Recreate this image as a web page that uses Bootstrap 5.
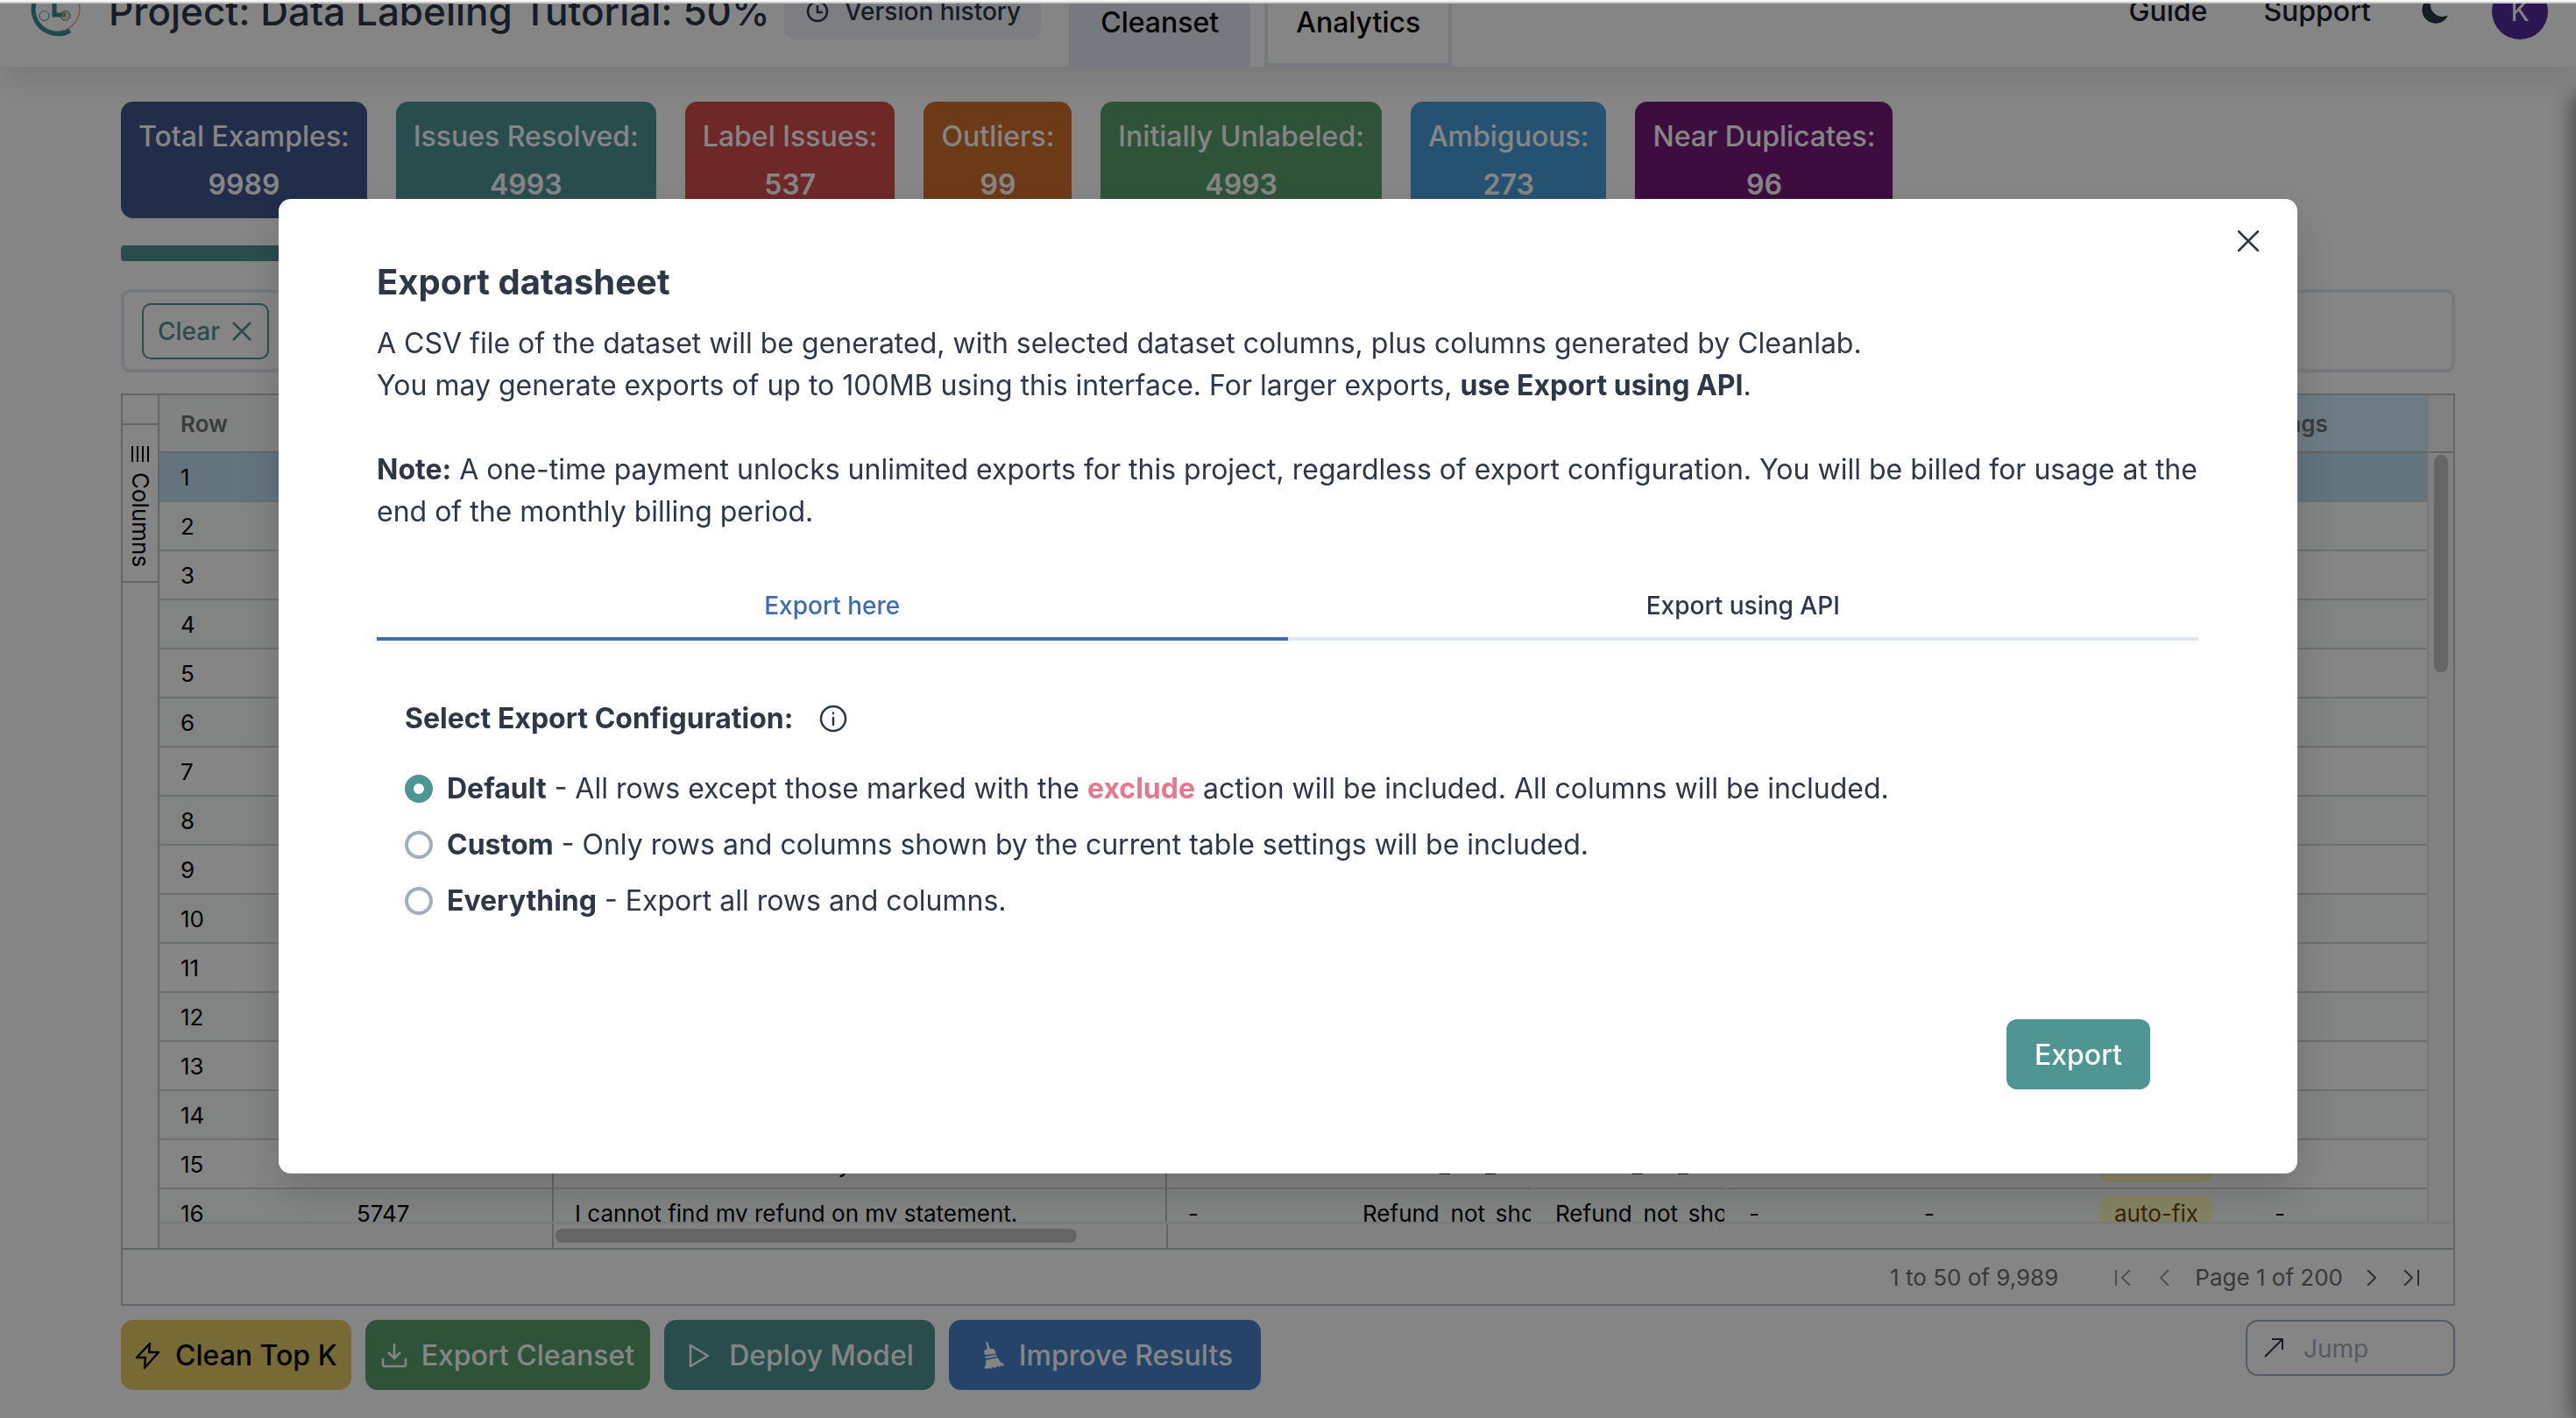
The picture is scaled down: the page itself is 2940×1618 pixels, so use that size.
<!DOCTYPE html>
<html lang="en">
<head>
<meta charset="utf-8">
<meta name="viewport" content="width=device-width, initial-scale=1">
<title>Export datasheet</title>
<link href="https://cdn.jsdelivr.net/npm/bootstrap@5.3.0/dist/css/bootstrap.min.css" rel="stylesheet">
<style>
  :root { --ink: #2d3748; --teal: #4f9593; --line: #bdc3c7; --soft: #e2e8f0; }
  html, body { height: 100%; }
  body { font-family: Inter, "Liberation Sans", sans-serif; font-size: 32px; line-height: 48px; color: var(--ink); background: #fff; overflow: hidden; }
  svg { display: block; flex: none; }
  .window-edge { height: 4px; background: #f7f7f8; border-bottom: 2px solid #c8c8c8; z-index: 1080; }

  .site-bar { height: 128px; margin-top: -52px; padding: 2px 32px 0; background: #fff; box-shadow: 0 20px 30px -6px rgba(0,0,0,.1); position: relative; }
  .project-name { font-size: 44px; line-height: 56px; font-weight: 500; margin-left: 32px; }
  .history-btn { height: 64px; margin-left: 16px; padding: 0 22px 0 24px; gap: 18px; font-size: 28px; font-weight: 500; background: #edf2f7; border-radius: 12px; color: var(--ink); }
  .site-tab { height: 100px; padding: 0 32px; font-weight: 500; color: #000; border: 4px solid var(--soft); text-decoration: none; }
  .site-tab.active { background: var(--soft); }
  .side-link { color: #1a202c; font-weight: 500; text-decoration: none; }
  .moon { margin: 0 48px 0 56px; }
  .user-dot { width: 64px; height: 64px; background: #512c9e; color: #fff; }

  .page-main { padding: 40px 138px 0; }
  .stat-row { gap: 33px; }
  .stat-tile { height: 133px; padding: 12px 20px; border-radius: 14px; color: #fff; line-height: 55px; font-weight: 500; text-align: center; }
  .stat-tile b { font-weight: 600; }
  .bg-navy { background: #41578f; } .bg-teal { background: var(--teal); } .bg-brick { background: #d34d4d; }
  .bg-rust { background: #d1702f; } .bg-leaf { background: #5aa06e; } .bg-sky { background: #499edb; } .bg-plum { background: #77197b; }
  .done-track { height: 18px; margin-top: 31px; border-radius: 4px; }
  .filter-box { height: 95px; margin-top: 32px; padding: 0 20px; border: 4px solid var(--soft); border-radius: 10px; }
  .clear-btn { height: 64px; padding: 0 18px 0 16px; gap: 14px; font-size: 28px; font-weight: 500; color: var(--teal); border: 2px solid var(--teal); border-radius: 10px; background: none; }

  .sheet { margin-top: 24px; border: 2px solid var(--line); font-size: 26px; line-height: 36px; color: #000; }
  .sheet-side { width: 42px; border-right: 2px solid var(--line); padding-top: 32px; }
  .sheet-side button { writing-mode: vertical-rl; width: 40px; height: 182px; padding: 24px 0 0; gap: 12px; font-size: 26px; line-height: 40px; color: #000; background: none; border: solid var(--line); border-width: 2px 0; }
  .sheet-rows { height: 943px; }
  .sheet-table { width: 100%; table-layout: fixed; border-collapse: separate; border-spacing: 0; }
  .sheet-table th, .sheet-table td { padding: 2px 0 0 24px; white-space: nowrap; overflow: hidden; border-bottom: 2px solid #cfd4d6; }
  .sheet-table th { height: 66px; color: #6d7375; font-weight: 600; background: #f7fafa; border-color: var(--line); }
  .sheet-table td { height: 56px; }
  .sheet-table tr:nth-child(even) td { background: #f9fdfb; }
  .sheet-table tr.picked td { background: #bedff4; }
  .sheet-table th.tinted { background: #d2ecfd; }
  .sheet-table td.edge { border-right: 2px solid var(--line); }
  .sheet-table td.cut { border-right: 4px solid transparent; }
  .fix-tag { display: inline-block; height: 40px; line-height: 40px; padding: 0 17px; border-radius: 12px; background: #fefcbf; color: #744210; vertical-align: middle; }
  .rail { width: 30px; background: #f7f7f7; border-left: 2px solid #e2e5e7; }
  .rail-top { height: 66px; border-bottom: 2px solid var(--line); }
  .rail-thumb { width: 16px; height: 248px; margin: 2px auto 0; border-radius: 8px; background: #c1c1c1; }
  .h-rail { height: 30px; background: #f9f9f9; border-top: 2px solid #e6e8ea; }
  .h-pinned { width: 450px; border-right: 2px solid var(--line); }
  .h-track { width: 701px; border-right: 2px solid var(--line); }
  .h-thumb { height: 16px; width: 595px; border-radius: 8px; background: #c1c1c1; margin: 6px 0 0 2px; }
  .pager { height: 64px; border-top: 2px solid var(--line); padding: 2px 38px 0; color: #6d6d6d; }
  .pager button { border: 0; background: none; padding: 0; color: #5a5a5a; }
  .pager button:disabled { color: #999; }

  .act { height: 80px; border: 0; border-radius: 14px; font-weight: 500; color: #fff; padding: 2px 16px 0; gap: 16px; }
  .act-gold { background: #e7cc64; color: #000; }
  .act-blue { background: #4981ca; }
  .act-sm { padding-left: 18px; padding-right: 18px; }
  .act-md { padding-left: 18px; padding-right: 24px; }
  .act-lg { padding-left: 26px; padding-right: 32px; gap: 14px; }
  .jump-box { width: 239px; height: 64px; border: 2px solid #a0aec0; border-radius: 14px; padding: 0 18px; gap: 22px; }
  .jump-box input { min-width: 0; width: 100%; border: 0; background: none; outline: 0; font-size: 28px; padding: 2px 0 0; }
  .jump-box input::placeholder { color: #a0aec0; opacity: 1; }

  .drawer-shade { position: fixed; left: 100%; top: 112px; bottom: 0; width: 40px; box-shadow: 0 0 24px 4px rgba(0,0,0,.5); }
  .modal-backdrop.show { opacity: .48; }
  .export-dialog { max-width: 2304px; margin: 227px auto 0; }
  .export-dialog .modal-content { border: 0; border-radius: 14px; padding: 68px 113px 96px 112px; color: var(--ink); box-shadow: 0 20px 50px rgba(0,0,0,.16); }
  .shut-btn { position: absolute; right: 44px; top: 36px; padding: 0; border: 0; background: none; color: var(--ink); }
  .dialog-title { font-size: 40px; line-height: 54px; font-weight: 700; margin: 0 0 19px; }
  .export-tabs { margin-top: 63px; font-size: 28px; line-height: 40px; }
  .export-tabs button { border: 0; border-bottom: 4px solid var(--soft); background: none; padding: 0 0 16px; font-weight: 500; color: var(--ink); height: 60px; }
  .export-tabs button.active { color: #3e6cae; border-color: #3e6cae; }
  .export-form { margin: 65px 32px 0; }
  .export-form legend { font-size: 32px; line-height: 48px; font-weight: 700; gap: 30px; margin: 0 0 24px; }
  .choice { gap: 16px; height: 64px; }
  .choice input { appearance: none; width: 32px; height: 32px; margin: 0; border: 4px solid #a0aec0; border-radius: 50%; flex: none; }
  .choice input:checked { border: 10px solid var(--teal); }
  .modal-content b { font-weight: 700; }
  .choice .drop { color: #e5788f; }
  .go-btn { height: 80px; margin: 103px 55px 0 0; padding: 2px 32px 0; border: 0; border-radius: 12px; background: var(--teal); color: #fff; font-weight: 500; }
</style>
<script src="https://cdn.jsdelivr.net/npm/bootstrap@5.3.0/dist/js/bootstrap.bundle.min.js"></script>
</head>
<body>
<div class="window-edge fixed-top"></div>

<nav class="site-bar d-flex align-items-center">
  <svg width="60" height="64" viewBox="0 0 60 64" fill="none" aria-hidden="true">
    <circle cx="33" cy="29" r="26" stroke="#e0b070" stroke-width="1.500"/>
    <path d="M30 2a28 28 0 1 0 18 52" stroke="#35909a" stroke-width="5"/>
    <path d="M30 18v18h13" stroke="#35909a" stroke-width="5"/>
    <circle cx="18.500" cy="37" r="5.500" stroke="#35909a"/>
    <circle cx="42.500" cy="37" r="5.500" stroke="#35909a" fill="#e0b070" fill-opacity=".5"/>
  </svg>
  <h1 class="project-name mb-0 text-nowrap">Project: Data Labeling Tutorial: 50%</h1>
  <button class="history-btn btn d-flex align-items-center text-nowrap" type="button">
    <svg width="26" height="26" viewBox="0 0 26 26" fill="none" stroke="currentColor" stroke-width="2.500"><circle cx="13" cy="13" r="11"/><path d="M13 6v8h6"/></svg>
    Version history
  </button>
  <div class="d-flex align-self-end ms-4 gap-3 ps-2">
    <a class="site-tab active d-flex align-items-center" href="#">Cleanset</a>
    <a class="site-tab d-flex align-items-center" href="#">Analytics</a>
  </div>
  <div class="d-flex align-items-center ms-auto">
    <a class="side-link me-5" href="#">Guide</a>
    <a class="side-link ms-3" href="#">Support</a>
    <svg class="moon" width="34" height="34" viewBox="0 0 34 34" fill="#2d3748" aria-label="Dark mode"><path d="M15 0A15.500 15.500 0 1 0 32 21.500 14 14 0 0 1 15 0z"/></svg>
    <span class="user-dot rounded-circle d-flex align-items-center justify-content-center">K</span>
  </div>
</nav>

<main class="page-main">
  <div class="stat-row d-flex text-nowrap">
    <div class="stat-tile bg-navy">Total Examples:<br><b>9989</b></div>
    <div class="stat-tile bg-teal">Issues Resolved:<br><b>4993</b></div>
    <div class="stat-tile bg-brick">Label Issues:<br><b>537</b></div>
    <div class="stat-tile bg-rust">Outliers:<br><b>99</b></div>
    <div class="stat-tile bg-leaf">Initially Unlabeled:<br><b>4993</b></div>
    <div class="stat-tile bg-sky">Ambiguous:<br><b>273</b></div>
    <div class="stat-tile bg-plum">Near Duplicates:<br><b>96</b></div>
  </div>
  <div class="done-track overflow-hidden"><div class="bg-teal h-100 w-50"></div></div>
  <div class="filter-box d-flex align-items-center">
    <button class="clear-btn d-flex align-items-center" type="button">Clear
      <svg width="22" height="22" viewBox="0 0 22 22" stroke="currentColor" stroke-width="2.500"><path d="M1 1l20 20M21 1L1 21"/></svg>
    </button>
  </div>

  <section class="sheet">
    <div class="d-flex">
      <div class="sheet-side flex-shrink-0">
        <button type="button" class="d-flex align-items-center">
          <svg width="22" height="18" viewBox="0 0 22 18" stroke="#000" stroke-width="2"><path d="M2 0v18M8 0v18M14 0v18M20 0v18"/></svg>
          Columns
        </button>
      </div>
      <div class="flex-grow-1 overflow-hidden">
        <div class="d-flex sheet-rows overflow-hidden">
          <div class="flex-grow-1">
            <table class="sheet-table">
              <colgroup><col style="width:201px"><col style="width:249px"><col><col style="width:199px"><col style="width:220px"><col style="width:221px"><col style="width:200px"><col style="width:200px"><col style="width:200px"><col style="width:198px"></colgroup>
              <thead><tr><th>Row</th><th></th><th></th><th></th><th></th><th></th><th></th><th></th><th></th><th class="tinted">Tags</th></tr></thead>
              <tbody>
                <tr class="picked"><td>1</td><td></td><td></td><td></td><td></td><td></td><td></td><td></td><td></td><td></td></tr>
                <tr><td>2</td><td></td><td></td><td></td><td></td><td></td><td></td><td></td><td></td><td></td></tr>
                <tr><td>3</td><td></td><td></td><td></td><td></td><td></td><td></td><td></td><td></td><td></td></tr>
                <tr><td>4</td><td></td><td></td><td></td><td></td><td></td><td></td><td></td><td></td><td></td></tr>
                <tr><td>5</td><td></td><td></td><td></td><td></td><td></td><td></td><td></td><td></td><td></td></tr>
                <tr><td>6</td><td></td><td></td><td></td><td></td><td></td><td></td><td></td><td></td><td></td></tr>
                <tr><td>7</td><td></td><td></td><td></td><td></td><td></td><td></td><td></td><td></td><td></td></tr>
                <tr><td>8</td><td></td><td></td><td></td><td></td><td></td><td></td><td></td><td></td><td></td></tr>
                <tr><td>9</td><td></td><td></td><td></td><td></td><td></td><td></td><td></td><td></td><td></td></tr>
                <tr><td>10</td><td></td><td></td><td></td><td></td><td></td><td></td><td></td><td></td><td></td></tr>
                <tr><td>11</td><td></td><td></td><td></td><td></td><td></td><td></td><td></td><td></td><td></td></tr>
                <tr><td>12</td><td></td><td></td><td></td><td></td><td></td><td></td><td></td><td></td><td></td></tr>
                <tr><td>13</td><td></td><td></td><td></td><td></td><td></td><td></td><td></td><td></td><td></td></tr>
                <tr><td>14</td><td></td><td></td><td></td><td></td><td></td><td></td><td></td><td></td><td></td></tr>
                <tr><td>15</td><td class="edge"></td><td class="edge">The refund has not hit my card statement.</td><td></td><td class="cut">Refund_not_showing</td><td class="cut">Refund_not_showing</td><td></td><td></td><td><span class="fix-tag">auto-fix</span></td><td></td></tr>
                <tr><td>16</td><td class="edge">5747</td><td class="edge">I cannot find my refund on my statement.</td><td>-</td><td class="cut">Refund_not_showing</td><td class="cut">Refund_not_showing</td><td>-</td><td>-</td><td><span class="fix-tag">auto-fix</span></td><td>-</td></tr>
              </tbody>
            </table>
          </div>
          <div class="rail flex-shrink-0">
            <div class="rail-top"></div>
            <div class="rail-thumb"></div>
          </div>
        </div>
        <div class="h-rail d-flex">
          <div class="h-pinned"></div>
          <div class="h-track"><div class="h-thumb"></div></div>
        </div>
      </div>
    </div>
    <div class="pager d-flex align-items-center justify-content-end">
      <span>1 to 50 of 9,989</span>
      <button class="ms-5 ps-3" type="button" disabled aria-label="First page"><svg width="20" height="18" viewBox="0 0 20 18" fill="none" stroke="currentColor" stroke-width="2"><path d="M2 0v18M18 0L9 9l9 9"/></svg></button>
      <button class="ms-4 ps-1" type="button" disabled aria-label="Previous page"><svg width="20" height="18" viewBox="0 0 20 18" fill="none" stroke="currentColor" stroke-width="2"><path d="M14 0L5 9l9 9"/></svg></button>
      <span class="ms-4">Page 1 of 200</span>
      <button class="ms-4" type="button" aria-label="Next page"><svg width="20" height="18" viewBox="0 0 20 18" fill="none" stroke="currentColor" stroke-width="2"><path d="M4 0l9 9-9 9"/></svg></button>
      <button class="ms-4" type="button" aria-label="Last page"><svg width="20" height="18" viewBox="0 0 20 18" fill="none" stroke="currentColor" stroke-width="2"><path d="M2 0l9 9-9 9M18 0v18"/></svg></button>
    </div>
  </section>

  <div class="d-flex align-items-start gap-3 mt-3 text-nowrap">
    <button class="act act-gold d-flex align-items-center" type="button">
      <svg width="30" height="32" viewBox="0 0 30 32" fill="none" stroke="#000" stroke-width="2.500" stroke-linejoin="round"><path d="M17 2L2 18h10l-1 12L27 12H16z"/></svg>
      Clean Top K
    </button>
    <button class="act act-sm bg-leaf d-flex align-items-center" type="button">
      <svg width="30" height="30" viewBox="0 0 30 30" fill="none" stroke="#fff" stroke-width="2.500"><path d="M15 1v17M8 11l7 7 7-7M2 18v7q0 2 2 2h22q2 0 2-2v-7"/></svg>
      Export Cleanset
    </button>
    <button class="act act-md bg-teal d-flex align-items-center" type="button">
      <svg width="40" height="28" viewBox="0 0 40 28" fill="none" stroke="#fff" stroke-width="2.500" stroke-linejoin="round"><path d="M12 2v24l20-12z"/></svg>
      Deploy Model
    </button>
    <button class="act act-lg act-blue d-flex align-items-center" type="button">
      <svg width="40" height="32" viewBox="0 0 40 32" fill="#fff"><path d="M16 1l2-1 3 8q5-1 6 4l1 2-13 1-1-5 4-2zM15 17l13-2 1 2-13 2zM16 21l14-3q2 6 7 7l-1 3-3-1-1 2-3-1-2 2-3-1-2 2-2-1-2 1-4-1q3-4 2-9z"/></svg>
      Improve Results
    </button>
    <label class="jump-box d-flex align-items-center ms-auto">
      <svg width="24" height="24" viewBox="0 0 24 24" fill="none" stroke="#2d3748" stroke-width="2"><path d="M2 22L22 2M10 2h12v12"/></svg>
      <input type="text" placeholder="Jump" aria-label="Jump to row">
    </label>
  </div>
</main>
<div class="drawer-shade"></div>

<div class="modal-backdrop show"></div>
<div class="modal d-block" tabindex="-1" role="dialog" aria-labelledby="dlg-title">
  <div class="export-dialog modal-dialog">
    <div class="modal-content">
      <button class="shut-btn" type="button" aria-label="Close">
        <svg width="24" height="24" viewBox="0 0 24 24" stroke="currentColor" stroke-width="2.500" stroke-linecap="round"><path d="M1 1l22 22M23 1L1 23"/></svg>
      </button>
      <h2 class="dialog-title" id="dlg-title">Export datasheet</h2>
      <p class="mb-5">A CSV file of the dataset will be generated, with selected dataset columns, plus columns generated by Cleanlab.<br>You may generate exports of up to 100MB using this interface. For larger exports, <b>use Export using API</b>.</p>
      <p class="mb-0"><b>Note:</b> A one-time payment unlocks unlimited exports for this project, regardless of export configuration. You will be billed for usage at the end of the monthly billing period.</p>
      <div class="export-tabs d-flex" role="tablist">
        <button class="active w-50" type="button" role="tab" aria-selected="true">Export here</button>
        <button class="w-50" type="button" role="tab" aria-selected="false">Export using API</button>
      </div>
      <fieldset class="export-form">
        <legend class="d-flex align-items-center">Select Export Configuration:
          <svg width="32" height="32" viewBox="0 0 32 32" fill="none" stroke="currentColor" stroke-width="2.500" stroke-linecap="round"><circle cx="16" cy="16" r="14"/><path d="M16 15v8M16 9.500v.500"/></svg>
        </legend>
        <label class="choice d-flex align-items-center"><input type="radio" name="cfg" checked><span><b>Default</b> - All rows except those marked with the <b class="drop">exclude</b> action will be included. All columns will be included.</span></label>
        <label class="choice d-flex align-items-center"><input type="radio" name="cfg"><span><b>Custom</b> - Only rows and columns shown by the current table settings will be included.</span></label>
        <label class="choice d-flex align-items-center"><input type="radio" name="cfg"><span><b>Everything</b> - Export all rows and columns.</span></label>
      </fieldset>
      <button class="go-btn align-self-end" type="button">Export</button>
    </div>
  </div>
</div>
</body>
</html>
